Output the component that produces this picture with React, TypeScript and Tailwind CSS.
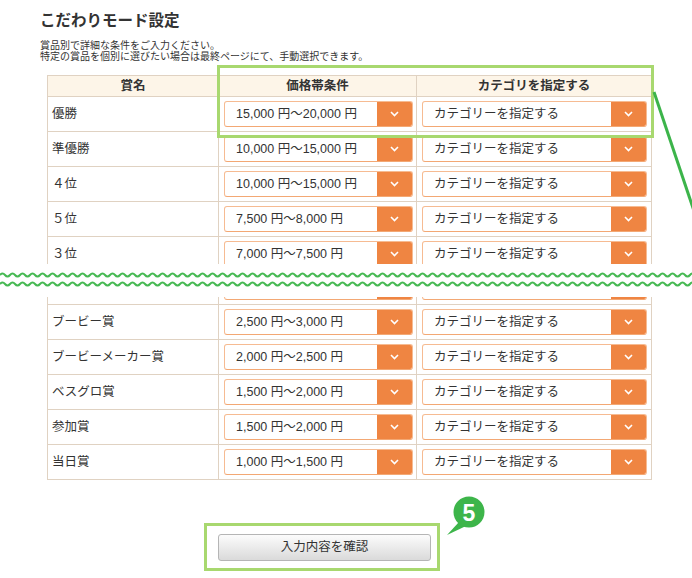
import React from "react";

const topRows = [
  { name: "優勝", price: "15,000 円～20,000 円" },
  { name: "準優勝", price: "10,000 円～15,000 円" },
  { name: "４位", price: "10,000 円～15,000 円" },
  { name: "５位", price: "7,500 円～8,000 円" },
  { name: "３位", price: "7,000 円～7,500 円" },
];

const bottomRows = [
  { name: "ブービー賞", price: "2,500 円～3,000 円" },
  { name: "ブービーメーカー賞", price: "2,000 円～2,500 円" },
  { name: "ベスグロ賞", price: "1,500 円～2,000 円" },
  { name: "参加賞", price: "1,500 円～2,000 円" },
  { name: "当日賞", price: "1,000 円～1,500 円" },
];

function Chevron() {
  return (
    <svg width="9" height="6" viewBox="0 0 9 6">
      <polyline points="1,1 4.5,4.5 8,1" fill="none" stroke="#fff" strokeWidth="1.6" />
    </svg>
  );
}

function Select({ label }: { label: string }) {
  return (
    <div className="flex h-[26px] w-full rounded-[3px] border border-[#f6bb92] border-b-[#f3a874] bg-white overflow-hidden">
      <div className="flex flex-1 items-center pl-[11px] text-[12.5px] text-[#333]">{label}</div>
      <div className="flex w-[35px] items-center justify-center bg-[#ef8542]">
        <Chevron />
      </div>
    </div>
  );
}

function Row({ name, price, category = "カテゴリーを指定する" }: { name: string; price: string; category?: string }) {
  return (
    <div className="grid h-[35px] grid-cols-[171px_198px_234px] border-b border-[#e0d2c2]">
      <div className="flex items-center border-r border-[#e0d2c2] pl-[4px] text-[12.5px] text-[#333]">{name}</div>
      <div className="flex items-center border-r border-[#e0d2c2] pl-[5px] pr-[3px]">
        <Select label={price} />
      </div>
      <div className="flex items-center pl-[5px] pr-[4px]">
        <Select label={category} />
      </div>
    </div>
  );
}

function Wave() {
  const segs = Array.from({ length: 140 }, () => "t5,0").join(" ");
  return (
    <svg width="692" height="6" viewBox="0 0 692 6" className="block">
      <path d={`M0,3 q2.5,-3 5,0 ${segs}`} fill="none" stroke="#47b953" strokeWidth="2" />
    </svg>
  );
}

export default function App() {
  return (
    <div
      className="relative h-[578px] w-[692px] overflow-hidden bg-white text-[#333]"
      style={{ fontFamily: '"Liberation Sans", "Noto Sans CJK JP", sans-serif' }}
    >
      <div className="pl-[40px] pt-[11px]">
        <h1 className="text-[15.5px] font-bold leading-[20px]">こだわりモード設定</h1>
        <p className="mt-[9px] text-[10px] leading-[11px]">
          賞品別で詳細な条件をご入力ください。
          <br />
          特定の賞品を個別に選びたい場合は最終ページにて、手動選択できます。
        </p>
      </div>

      <div className="ml-[47px] mt-[13px] h-[189px] w-[605px] overflow-hidden border-x border-t border-[#e0d2c2]">
        <div className="grid h-[21px] grid-cols-[171px_198px_234px] border-b border-[#e0d2c2] bg-[#fdf5e8] text-[12.5px] font-bold">
          <div className="flex items-center justify-center border-r border-[#e0d2c2]">賞名</div>
          <div className="flex items-center justify-center border-r border-[#e0d2c2]">価格帯条件</div>
          <div className="flex items-center justify-center">カテゴリを指定する</div>
        </div>
        {topRows.map((r) => (
          <Row key={r.name} {...r} />
        ))}
      </div>

      <div className="flex h-[33px] flex-col gap-[3px] pt-[8px]">
        <Wave />
        <Wave />
      </div>

      <div className="ml-[47px] w-[605px] border-x border-[#e0d2c2]">
        <div className="h-[8px] overflow-hidden">
          <div className="-mt-[27px]">
            <Row name="" price="" category="" />
          </div>
        </div>
        {bottomRows.map((r) => (
          <Row key={r.name} {...r} />
        ))}
      </div>

      <div className="ml-[218px] mt-[54px]">
        <button
          type="button"
          className="flex h-[27px] w-[213px] items-center justify-center rounded-[3px] border border-[#b5b5b5] bg-gradient-to-b from-[#fcfcfc] to-[#dadada] text-[12.5px] text-[#333]"
        >
          入力内容を確認
        </button>
      </div>

      <div className="absolute left-[217px] top-[65px] h-[73px] w-[437px] border-[3px] border-[#a8d86f]" />
      <div className="absolute left-[204px] top-[523px] h-[48px] w-[236px] border-[3px] border-[#a8d86f]" />

      <svg className="absolute left-0 top-0" width="692" height="578" viewBox="0 0 692 578">
        <line x1="654" y1="92" x2="695" y2="214" stroke="#3cb44a" strokeWidth="3" />
        <polygon points="459,522 447,535 466,526" fill="#3db54a" />
        <circle cx="469" cy="512" r="15.5" fill="#3db54a" />
        <text
          x="469"
          y="520.5"
          textAnchor="middle"
          fontSize="23"
          fontWeight="bold"
          fill="#fff"
          fontFamily="Liberation Sans, sans-serif"
        >
          5
        </text>
      </svg>
    </div>
  );
}
